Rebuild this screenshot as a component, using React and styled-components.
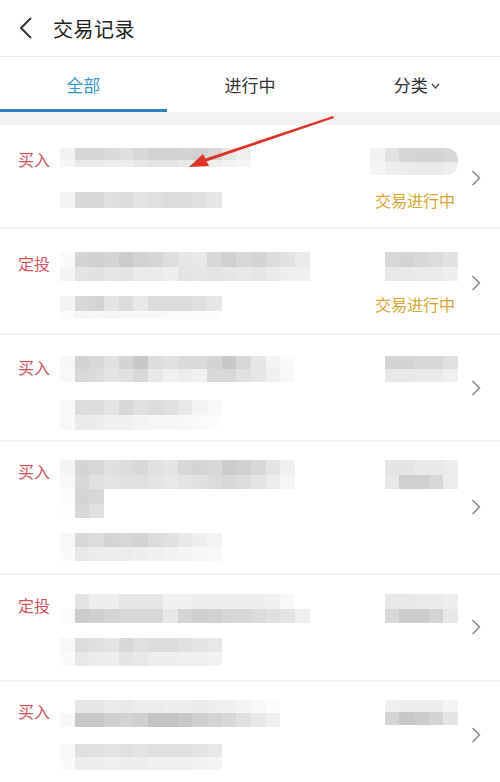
import React from 'react'
import styled, { createGlobalStyle } from 'styled-components'

const GlobalStyle = createGlobalStyle`
  html, body {
    margin: 0;
    padding: 0;
    background: #ffffff;
  }
  body {
    font-family: "Noto Sans CJK SC", "Noto Sans", sans-serif;
    color: #222;
  }
`

const Page = styled.div`
  width: 500px;
  height: 782px;
  overflow: hidden;
  position: relative;
  background: #fff;
`

const Header = styled.div`
  height: 57px;
  display: flex;
  align-items: center;
  padding-left: 19px;
  border-bottom: 1px solid #ececec;
  box-sizing: border-box;
`

const BackIcon = styled.svg`
  width: 14px;
  height: 22px;
  margin-right: 20px;
`

const Title = styled.h1`
  margin: 0;
  font-size: 20px;
  font-weight: 400;
  color: #222;
  letter-spacing: 0.5px;
`

const Tabs = styled.div`
  height: 55px;
  display: grid;
  grid-template-columns: repeat(3, 1fr);
`

const Tab = styled.div`
  position: relative;
  display: flex;
  align-items: center;
  justify-content: center;
  font-size: 17px;
  color: ${p => (p.$active ? '#3d98cc' : '#333')};
  &::after {
    content: '';
    display: ${p => (p.$active ? 'block' : 'none')};
    position: absolute;
    left: 0;
    right: 0;
    bottom: 0;
    height: 3px;
    background: #2f84c0;
  }
`

const Caret = styled.svg`
  width: 9px;
  height: 6px;
  margin-left: 3px;
  margin-top: 3px;
`

const Band = styled.div`
  height: 13px;
  background: #f3f3f3;
`

const List = styled.div``

const Row = styled.div`
  height: ${p => p.$h}px;
  padding-top: ${p => p.$pt}px;
  padding-left: 18px;
  box-sizing: border-box;
  border-bottom: 2px solid #f2f2f2;
  display: grid;
  grid-template-columns: 42px 310px 90px 1fr;
  align-items: start;
`

const Kind = styled.div`
  font-size: 16px;
  line-height: 22px;
  color: #cf5560;
`

const Middle = styled.div`
  display: flex;
  flex-direction: column;
`

const TitleArea = styled.div`
  min-height: 29px;
  margin-bottom: 15px;
`

const Right = styled.div`
  display: flex;
  flex-direction: column;
`

const AmountArea = styled.div`
  height: 29px;
`

const Status = styled.div`
  margin-top: 13px;
  font-size: 16px;
  line-height: 20px;
  color: #d7a634;
  white-space: nowrap;
  margin-left: 5px;
`

const Chevron = styled.svg`
  align-self: center;
  justify-self: center;
  width: 10px;
  height: 16px;
  margin-left: -8px;
  transform: translateY(-10px);
`

const Mosaic = styled.div`
  display: flex;
  flex-direction: column;
  border-radius: ${p => p.$round ? '0 12px 12px 0' : '0'};
  overflow: hidden;
  width: max-content;
`

const MosaicRow = styled.div`
  display: flex;
  height: ${p => p.$h}px;
`

const Cell = styled.span`
  width: 14.7px;
  height: 100%;
  background: #${p => p.$g}${p => p.$g}${p => p.$g};
`

const Blur = ({ rows, round }) => (
  <Mosaic $round={round}>
    {rows.map(([h, s], i) => (
      <MosaicRow key={i} $h={h}>
        {s.split(' ').map((g, j) => <Cell key={j} $g={g} />)}
      </MosaicRow>
    ))}
  </Mosaic>
)

const records = [
  {
    kind: '买入', h: 104, pt: 23, status: '交易进行中',
    title: [[12, 'f2 d6 d6 da de d8 d2 d2 d4 d0 d8 e8 f0'], [7, 'f6 ea ea ec ee e8 e4 e4 ea e8 ee f2 f6']],
    sub: [[16, 'f4 d8 d8 e0 dc e4 e0 dc dc e0 e6']],
    amount: [[14, 'f2 e2 d6 d4 d4 d8'], [13, 'f4 ee ec ea ea ee']],
    round: true,
  },
  {
    kind: '定投', h: 106, pt: 23, status: '交易进行中',
    title: [[15, 'fa d4 d0 d4 cc d2 d6 de e6 e8 d8 d0 d8 d4 dc e2 ea'], [14, 'f4 e4 e2 e6 e4 ea ea ee e4 e6 e4 e6 e8 e6 ea ee f0']],
    sub: [[15, 'f4 d8 d4 e4 dc e8 dc dc dc e0 e6'], [8, 'fc f6 f8 f6 f8 f8 f8 fa fa fc fc']],
    amount: [[15, 'ff d8 d4 d8 dc e2'], [14, 'ff e8 e8 ea ea ee']],
  },
  {
    kind: '买入', h: 107, pt: 21,
    title: [[13, 'f6 d2 d8 e0 d4 c8 dc e0 da da d4 c8 d8 e6 f4 fa'], [13, 'f8 d8 dc e4 e0 d8 e8 f0 ec f0 d8 d8 e0 e6 f0 f8']],
    sub: [[15, 'f8 dc dc e4 d8 e0 dc e0 e8 f4 f8'], [15, 'f8 ea ec f0 f0 f4 f6 f6 f8 fa fc']],
    amount: [[13, 'ff d4 d4 d8 d8 e0'], [13, 'ff e8 e8 ea ea f0']],
  },
  {
    kind: '买入', h: 133, pt: 18,
    title: [[15, 'f4 d4 d8 e0 dc d8 e0 e4 d8 d4 d8 cc d0 d8 e4 f0'], [14, 'f8 d8 e0 e4 e0 e0 e4 e8 e4 e0 dc d8 dc e4 ec f6'], [15, 'fc d4 d8'], [14, 'fe d8 e0']],
    sub: [[14, 'f8 d8 dc d4 d8 d4 dc e0 e8 ee f4'], [14, 'fa e8 ec ec ec ee f0 f2 f4 f6 f8']],
    amount: [[15, 'ff e4 e4 e8 e8 ec'], [14, 'ff e8 d0 d0 d8 ec']],
  },
  {
    kind: '定投', h: 107, pt: 19,
    title: [[15, 'ff e4 ee ee e6 e6 e6 f0 f0 ee ee ee ee ee f0 f8 ff'], [14, 'fa cc d0 d4 d8 d8 d8 e8 d4 d0 d2 d6 d8 dc e0 e4 f0']],
    sub: [[14, 'f8 dc e0 e4 d8 e0 dc dc e0 e4 e8'], [14, 'fa e8 ec ee e4 e8 ee ee f0 f0 f2']],
    amount: [[15, 'ff e8 e8 ea ea ee'], [14, 'ff d8 cc cc d4 e8']],
  },
  {
    kind: '买入', h: 110, pt: 18,
    title: [[13, 'ff e6 e6 ea e8 ec ec ee ee ea ee f0 f4 f8 fc'], [14, 'f8 c8 c8 d0 d4 d0 c4 c4 c8 d0 d4 d8 e0 e8 f0']],
    sub: [[13, 'f8 e0 e0 e4 e0 e4 e0 e0 e0 e4 e8'], [13, 'fa ec ee f0 ee ee f0 f0 f0 f2 f4']],
    amount: [[12, 'ff f0 ec ec ec f4'], [13, 'ff d4 c8 cc d4 e4']],
  },
]

const Arrow = styled.svg`
  position: absolute;
  left: 0;
  top: 0;
  pointer-events: none;
`

const App = () => {
  return (
    <Page>
      <GlobalStyle />
      <Header>
        <BackIcon viewBox="0 0 14 22">
          <polyline points="12,1 2,11 12,21" fill="none" stroke="#333" strokeWidth="2" />
        </BackIcon>
        <Title>交易记录</Title>
      </Header>
      <Tabs>
        <Tab $active>全部</Tab>
        <Tab>进行中</Tab>
        <Tab>
          分类
          <Caret viewBox="0 0 9 6">
            <polyline points="1,1 4.5,5 8,1" fill="none" stroke="#444" strokeWidth="1.2" />
          </Caret>
        </Tab>
      </Tabs>
      <Band />
      <List>
        {records.map((r, i) => (
          <Row key={i} $h={r.h} $pt={r.pt}>
            <Kind>{r.kind}</Kind>
            <Middle>
              <TitleArea>
                <Blur rows={r.title} />
              </TitleArea>
              <Blur rows={r.sub} />
            </Middle>
            <Right>
              <AmountArea>
                <Blur rows={r.amount} round={r.round} />
              </AmountArea>
              {r.status && <Status>{r.status}</Status>}
            </Right>
            <Chevron viewBox="0 0 10 16">
              <polyline points="1.5,1 8.5,8 1.5,15" fill="none" stroke="#8a8a8a" strokeWidth="1.5" />
            </Chevron>
          </Row>
        ))}
      </List>
      <Arrow width="500" height="782" viewBox="0 0 500 782">
        <polygon points="333,116 334,118 205,162 204,159" fill="#e03229" />
        <polygon points="189,167 203,154 209,166" fill="#e03229" />
      </Arrow>
    </Page>
  )
}

export default App
